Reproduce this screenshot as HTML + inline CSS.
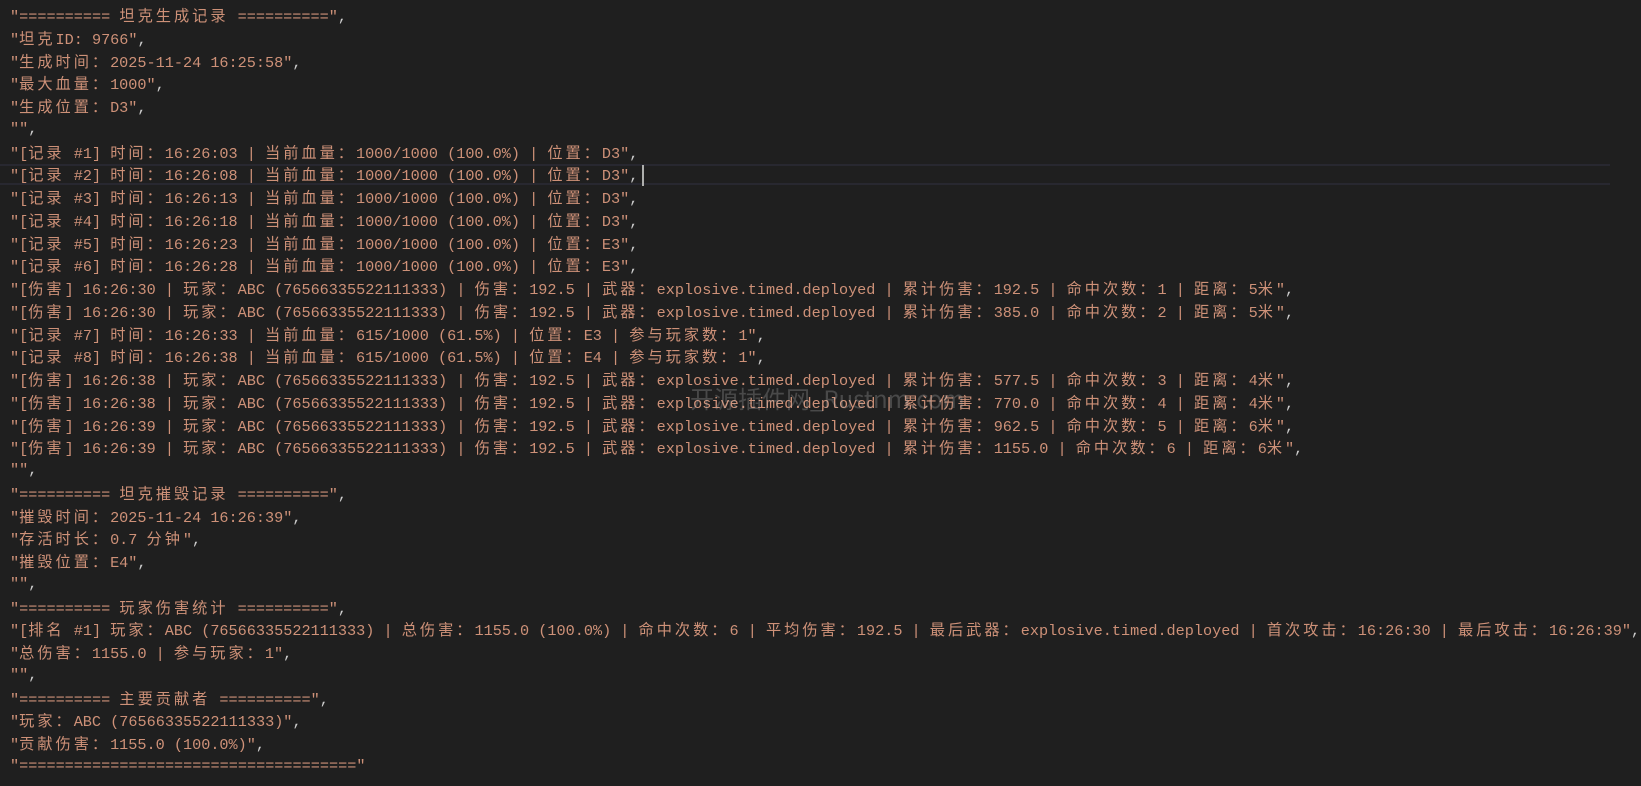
<!DOCTYPE html>
<html><head><meta charset="utf-8">
<style>
html,body{margin:0;padding:0;background:#1f1f1f;width:1641px;height:786px;overflow:hidden}
#ed{position:absolute;left:10px;top:4px;font-family:"Liberation Mono","Noto Sans CJK SC",monospace;font-size:15.2px;line-height:22.75px;color:#ce9178}
#ed div{height:22.75px;white-space:pre}
i{font-style:normal;font-family:"Noto Sans CJK SC",sans-serif;letter-spacing:3px;font-size:15.2px}
u{text-decoration:none;color:#cccccc}
#hl{position:absolute;left:0;top:164px;width:1610px;height:21px;border-top:2px solid #282830;border-bottom:2px solid #282830;box-sizing:border-box}
#cur{position:absolute;left:642px;top:165px;width:2px;height:21px;background:#aeafad}
#wm{position:absolute;left:690px;top:380px;font-family:"Noto Sans CJK SC","Liberation Sans",sans-serif;font-size:24px;color:rgba(200,200,200,0.25);white-space:pre}
</style></head><body>
<div id="hl"></div>
<div id="ed"><div>"========== <i>坦克生成记录</i> =========="<u>,</u></div><div>"<i>坦克</i>ID: 9766"<u>,</u></div><div>"<i>生成时间：</i>2025-11-24 16:25:58"<u>,</u></div><div>"<i>最大血量：</i>1000"<u>,</u></div><div>"<i>生成位置：</i>D3"<u>,</u></div><div>""<u>,</u></div><div>"[<i>记录</i> #1] <i>时间：</i>16:26:03 | <i>当前血量：</i>1000/1000 (100.0%) | <i>位置：</i>D3"<u>,</u></div><div>"[<i>记录</i> #2] <i>时间：</i>16:26:08 | <i>当前血量：</i>1000/1000 (100.0%) | <i>位置：</i>D3"<u>,</u></div><div>"[<i>记录</i> #3] <i>时间：</i>16:26:13 | <i>当前血量：</i>1000/1000 (100.0%) | <i>位置：</i>D3"<u>,</u></div><div>"[<i>记录</i> #4] <i>时间：</i>16:26:18 | <i>当前血量：</i>1000/1000 (100.0%) | <i>位置：</i>D3"<u>,</u></div><div>"[<i>记录</i> #5] <i>时间：</i>16:26:23 | <i>当前血量：</i>1000/1000 (100.0%) | <i>位置：</i>E3"<u>,</u></div><div>"[<i>记录</i> #6] <i>时间：</i>16:26:28 | <i>当前血量：</i>1000/1000 (100.0%) | <i>位置：</i>E3"<u>,</u></div><div>"[<i>伤害</i>] 16:26:30 | <i>玩家：</i>ABC (76566335522111333) | <i>伤害：</i>192.5 | <i>武器：</i>explosive.timed.deployed | <i>累计伤害：</i>192.5 | <i>命中次数：</i>1 | <i>距离：</i>5<i>米</i>"<u>,</u></div><div>"[<i>伤害</i>] 16:26:30 | <i>玩家：</i>ABC (76566335522111333) | <i>伤害：</i>192.5 | <i>武器：</i>explosive.timed.deployed | <i>累计伤害：</i>385.0 | <i>命中次数：</i>2 | <i>距离：</i>5<i>米</i>"<u>,</u></div><div>"[<i>记录</i> #7] <i>时间：</i>16:26:33 | <i>当前血量：</i>615/1000 (61.5%) | <i>位置：</i>E3 | <i>参与玩家数：</i>1"<u>,</u></div><div>"[<i>记录</i> #8] <i>时间：</i>16:26:38 | <i>当前血量：</i>615/1000 (61.5%) | <i>位置：</i>E4 | <i>参与玩家数：</i>1"<u>,</u></div><div>"[<i>伤害</i>] 16:26:38 | <i>玩家：</i>ABC (76566335522111333) | <i>伤害：</i>192.5 | <i>武器：</i>explosive.timed.deployed | <i>累计伤害：</i>577.5 | <i>命中次数：</i>3 | <i>距离：</i>4<i>米</i>"<u>,</u></div><div>"[<i>伤害</i>] 16:26:38 | <i>玩家：</i>ABC (76566335522111333) | <i>伤害：</i>192.5 | <i>武器：</i>explosive.timed.deployed | <i>累计伤害：</i>770.0 | <i>命中次数：</i>4 | <i>距离：</i>4<i>米</i>"<u>,</u></div><div>"[<i>伤害</i>] 16:26:39 | <i>玩家：</i>ABC (76566335522111333) | <i>伤害：</i>192.5 | <i>武器：</i>explosive.timed.deployed | <i>累计伤害：</i>962.5 | <i>命中次数：</i>5 | <i>距离：</i>6<i>米</i>"<u>,</u></div><div>"[<i>伤害</i>] 16:26:39 | <i>玩家：</i>ABC (76566335522111333) | <i>伤害：</i>192.5 | <i>武器：</i>explosive.timed.deployed | <i>累计伤害：</i>1155.0 | <i>命中次数：</i>6 | <i>距离：</i>6<i>米</i>"<u>,</u></div><div>""<u>,</u></div><div>"========== <i>坦克摧毁记录</i> =========="<u>,</u></div><div>"<i>摧毁时间：</i>2025-11-24 16:26:39"<u>,</u></div><div>"<i>存活时长：</i>0.7 <i>分钟</i>"<u>,</u></div><div>"<i>摧毁位置：</i>E4"<u>,</u></div><div>""<u>,</u></div><div>"========== <i>玩家伤害统计</i> =========="<u>,</u></div><div>"[<i>排名</i> #1] <i>玩家：</i>ABC (76566335522111333) | <i>总伤害：</i>1155.0 (100.0%) | <i>命中次数：</i>6 | <i>平均伤害：</i>192.5 | <i>最后武器：</i>explosive.timed.deployed | <i>首次攻击：</i>16:26:30 | <i>最后攻击：</i>16:26:39"<u>,</u></div><div>"<i>总伤害：</i>1155.0 | <i>参与玩家：</i>1"<u>,</u></div><div>""<u>,</u></div><div>"========== <i>主要贡献者</i> =========="<u>,</u></div><div>"<i>玩家：</i>ABC (76566335522111333)"<u>,</u></div><div>"<i>贡献伤害：</i>1155.0 (100.0%)"<u>,</u></div><div>"====================================="</div></div>
<div id="cur"></div>
<div id="wm">开源插件网_Rustnm.com</div>
</body></html>
